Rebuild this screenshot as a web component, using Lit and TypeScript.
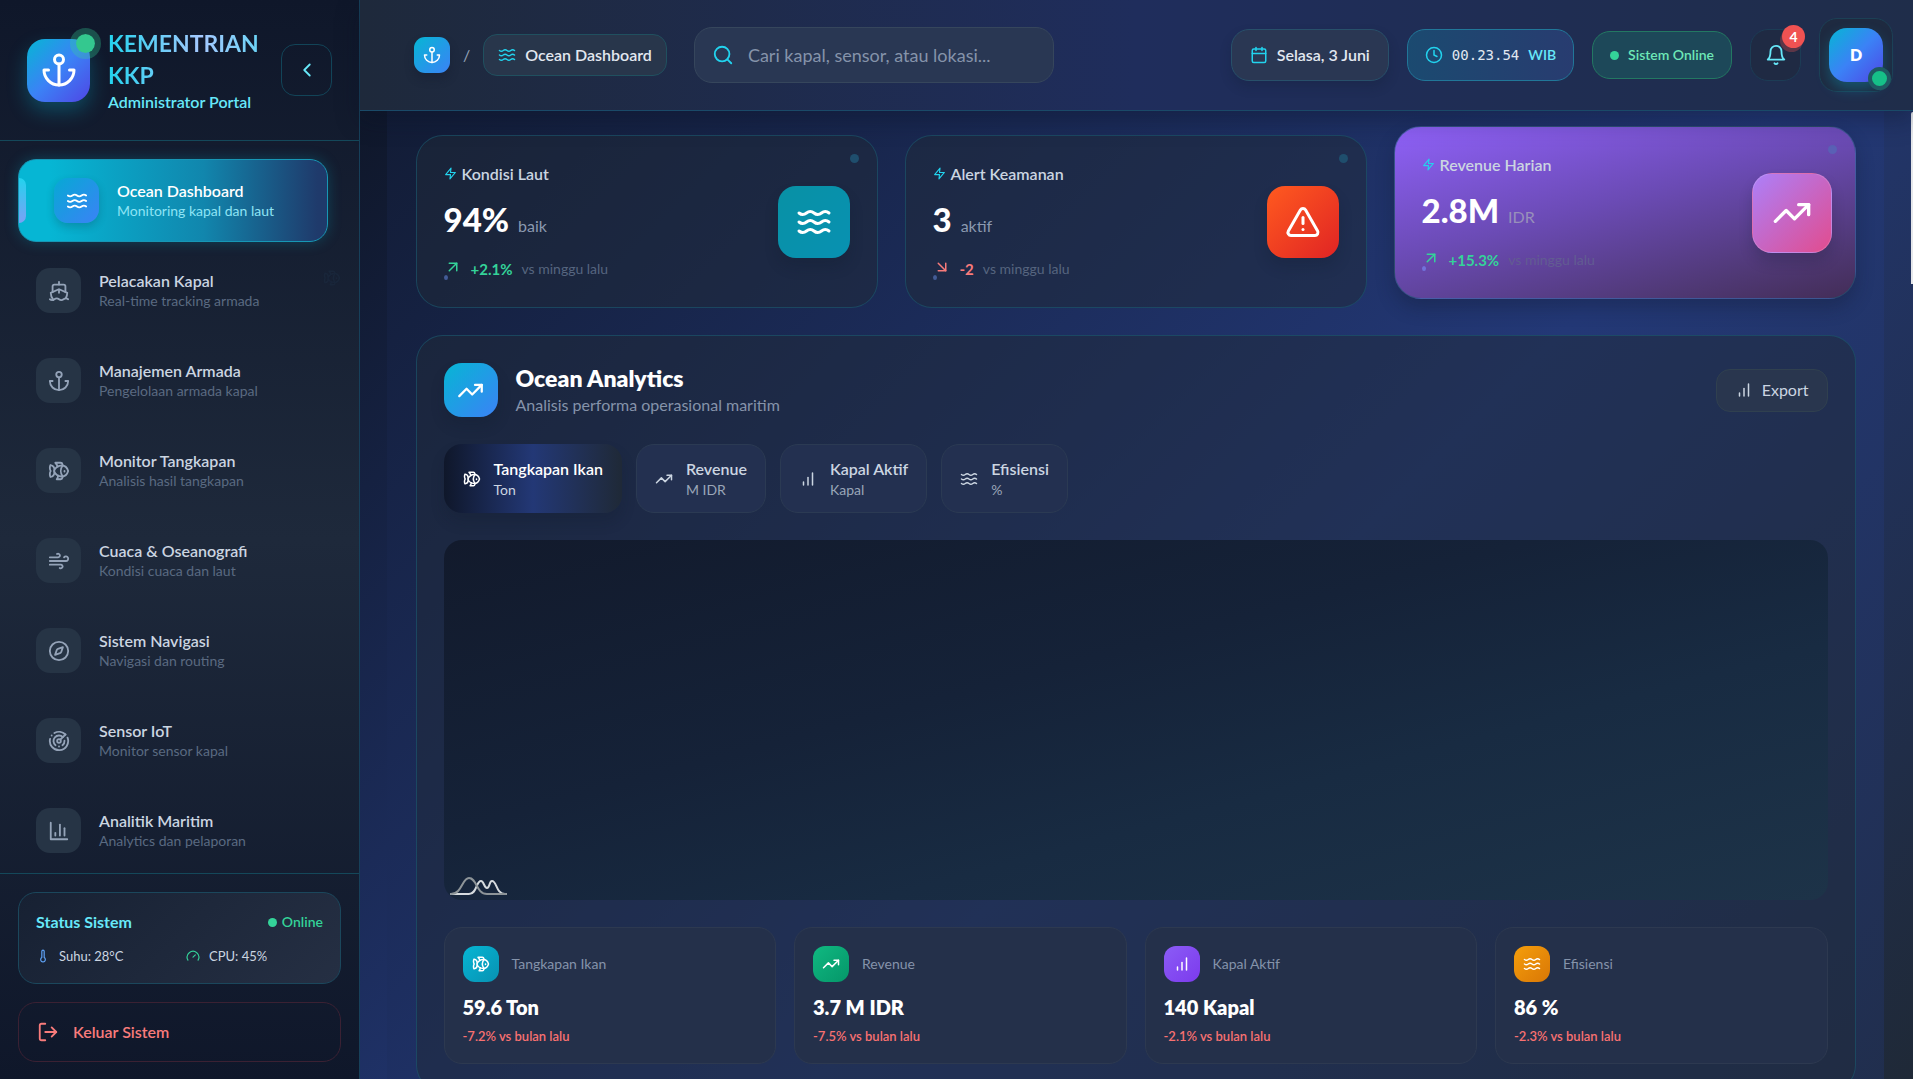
import { LitElement, html, css, svg, nothing } from "lit";
import { customElement, property, state } from "lit/decorators.js";
import { classMap } from "lit/directives/class-map.js";

const ICONS: Record<string, unknown> = {
  anchor: svg`<path d="M12 22V8"/><path d="M5 12H2a10 10 0 0 0 20 0h-3"/><circle cx="12" cy="5" r="3"/>`,
  waves: svg`<path d="M2 6c.6.5 1.2 1 2.5 1C7 7 7 5 9.5 5c2.6 0 2.4 2 5 2 2.5 0 2.5-2 5-2 1.3 0 1.9.5 2.5 1"/><path d="M2 12c.6.5 1.2 1 2.5 1 2.5 0 2.5-2 5-2 2.6 0 2.4 2 5 2 2.5 0 2.5-2 5-2 1.3 0 1.9.5 2.5 1"/><path d="M2 18c.6.5 1.2 1 2.5 1 2.5 0 2.5-2 5-2 2.6 0 2.4 2 5 2 2.5 0 2.5-2 5-2 1.3 0 1.9.5 2.5 1"/>`,
  ship: svg`<path d="M12 10.189V14"/><path d="M12 2v3"/><path d="M19 13V7a2 2 0 0 0-2-2H7a2 2 0 0 0-2 2v6"/><path d="M19.38 20A11.6 11.6 0 0 0 21 14l-8.188-3.639a2 2 0 0 0-1.624 0L3 14a11.6 11.6 0 0 0 2.81 7.76"/><path d="M2 21c.6.5 1.2 1 2.5 1 2.5 0 2.5-2 5-2 1.3 0 1.9.5 2.5 1s1.2 1 2.5 1c2.5 0 2.5-2 5-2 1.3 0 1.9.5 2.5 1"/>`,
  fish: svg`<path d="M6.5 12c.94-3.46 4.94-6 8.5-6 3.56 0 6.06 2.54 7 6-.94 3.47-3.44 6-7 6s-7.56-2.53-8.5-6Z"/><path d="M18 12v.5"/><path d="M16 17.93a9.77 9.77 0 0 1 0-11.86"/><path d="M7 10.67C7 8 5.58 5.97 2.73 5.5c-1 1.5-1 5 .23 6.5-1.24 1.5-1.24 5-.23 6.5C5.58 18.03 7 16 7 13.33"/><path d="M10.46 7.26C10.2 5.88 9.17 4.24 8 3h5.8a2 2 0 0 1 1.98 1.67l.23 1.4"/><path d="m16.01 17.93-.23 1.4A2 2 0 0 1 13.8 21H9.5a5.96 5.96 0 0 0 1.49-3.98"/>`,
  wind: svg`<path d="M12.8 19.6A2 2 0 1 0 14 16H2"/><path d="M17.5 8a2.5 2.5 0 1 1 2 4H2"/><path d="M9.8 4.4A2 2 0 1 1 11 8H2"/>`,
  compass: svg`<path d="m16.24 7.76-1.804 5.411a2 2 0 0 1-1.265 1.265L7.76 16.24l1.804-5.411a2 2 0 0 1 1.265-1.265z"/><circle cx="12" cy="12" r="10"/>`,
  radar: svg`<path d="M19.07 4.93A10 10 0 0 0 6.99 3.34"/><path d="M4 6h.01"/><path d="M2.29 9.62A10 10 0 1 0 21.31 8.35"/><path d="M16.24 7.76A6 6 0 1 0 8.23 16.67"/><path d="M12 18h.01"/><path d="M17.99 11.66A6 6 0 0 1 15.77 16.67"/><circle cx="12" cy="12" r="2"/><path d="m13.41 10.59 5.66-5.66"/>`,
  chart: svg`<path d="M3 3v18h18"/><path d="M18 17V9"/><path d="M13 17V5"/><path d="M8 17v-3"/>`,
  bars: svg`<path d="M12 20V10"/><path d="M18 20V4"/><path d="M6 20v-4"/>`,
  thermometer: svg`<path d="M14 4v10.54a4 4 0 1 1-4 0V4a2 2 0 0 1 4 0Z"/>`,
  gauge: svg`<path d="m12 14 4-4"/><path d="M3.34 19a10 10 0 1 1 17.32 0"/>`,
  logout: svg`<path d="M9 21H5a2 2 0 0 1-2-2V5a2 2 0 0 1 2-2h4"/><path d="m16 17 5-5-5-5"/><path d="M21 12H9"/>`,
  search: svg`<circle cx="11" cy="11" r="8"/><path d="m21 21-4.3-4.3"/>`,
  calendar: svg`<path d="M8 2v4"/><path d="M16 2v4"/><rect width="18" height="18" x="3" y="4" rx="2"/><path d="M3 10h18"/>`,
  clock: svg`<circle cx="12" cy="12" r="10"/><path d="M12 6v6l4 2"/>`,
  bell: svg`<path d="M6 8a6 6 0 0 1 12 0c0 7 3 9 3 9H3s3-2 3-9"/><path d="M10.3 21a1.94 1.94 0 0 0 3.4 0"/>`,
  zap: svg`<path d="M13 2 3 14h9l-1 8 10-12h-9l1-8z"/>`,
  up: svg`<path d="M7 7h10v10"/><path d="M7 17 17 7"/>`,
  down: svg`<path d="m7 7 10 10"/><path d="M17 7v10H7"/>`,
  trend: svg`<path d="m22 7-8.5 8.5-5-5L2 17"/><path d="M16 7h6v6"/>`,
  alert: svg`<path d="m21.73 18-8-14a2 2 0 0 0-3.48 0l-8 14A2 2 0 0 0 4 21h16a2 2 0 0 0 1.73-3"/><path d="M12 9v4"/><path d="M12 17h.01"/>`,
  left: svg`<path d="m15 18-6-6 6-6"/>`,
};

@customElement("line-icon")
class LineIcon extends LitElement {
  @property() name = "";
  @property({ type: Number }) size = 20;
  @property({ type: Number }) weight = 2;

  static styles = css`
    :host { display: inline-flex; flex: none; }
    svg { display: block; fill: none; stroke: currentColor; stroke-linecap: round; stroke-linejoin: round; }
  `;

  render() {
    return html`<svg width=${this.size} height=${this.size} viewBox="0 0 24 24" stroke-width=${this.weight} aria-hidden="true">${ICONS[this.name] ?? nothing}</svg>`;
  }
}

const NAV = [
  { icon: "waves", title: "Ocean Dashboard", sub: "Monitoring kapal dan laut" },
  { icon: "ship", title: "Pelacakan Kapal", sub: "Real-time tracking armada" },
  { icon: "anchor", title: "Manajemen Armada", sub: "Pengelolaan armada kapal" },
  { icon: "fish", title: "Monitor Tangkapan", sub: "Analisis hasil tangkapan" },
  { icon: "wind", title: "Cuaca & Oseanografi", sub: "Kondisi cuaca dan laut" },
  { icon: "compass", title: "Sistem Navigasi", sub: "Navigasi dan routing" },
  { icon: "radar", title: "Sensor IoT", sub: "Monitor sensor kapal" },
  { icon: "chart", title: "Analitik Maritim", sub: "Analytics dan pelaporan" },
];

const STATS = [
  { title: "Kondisi Laut", value: "94%", unit: "baik", delta: "+2.1%", up: true, icon: "waves", tone: "teal" },
  { title: "Alert Keamanan", value: "3", unit: "aktif", delta: "-2", up: false, icon: "alert", tone: "red" },
  { title: "Revenue Harian", value: "2.8M", unit: "IDR", delta: "+15.3%", up: true, icon: "trend", tone: "pink" },
];

const METRICS = [
  { icon: "fish", title: "Tangkapan Ikan", unit: "Ton", value: "59.6 Ton", delta: "-7.2%", tone: "cyan" },
  { icon: "trend", title: "Revenue", unit: "M IDR", value: "3.7 M IDR", delta: "-7.5%", tone: "green" },
  { icon: "bars", title: "Kapal Aktif", unit: "Kapal", value: "140 Kapal", delta: "-2.1%", tone: "violet" },
  { icon: "waves", title: "Efisiensi", unit: "%", value: "86 %", delta: "-2.3%", tone: "amber" },
];

@customElement("app-root")
class AppRoot extends LitElement {
  @state() private page = 0;
  @state() private tab = 0;

  static styles = css`
    :host { display: block; font-family: Lato, "Open Sans", sans-serif; font-size: 16px; line-height: 24px; color: #fff; }
    * { box-sizing: border-box; }
    button, input { font: inherit; color: inherit; margin: 0; }
    button { cursor: pointer; text-align: left; }
    h1, h2, h3, p, ul { margin: 0; padding: 0; font-size: inherit; font-weight: inherit; }
    a { color: inherit; text-decoration: none; }
    .tile { display: flex; align-items: center; justify-content: center; flex: none; color: #fff; }

    .shell { display: flex; height: 100vh; overflow: hidden; background: #0f172a; }

    .sidebar { position: relative; display: flex; flex-direction: column; flex: none; width: 360px; border-right: 1px solid #17405a; background: linear-gradient(180deg, #0f172a 0%, #1e293b 50%, #0f172a 100%); }
    .brand { display: flex; align-items: center; gap: 18px; height: 141px; padding: 0 27px; border-bottom: 1px solid #14485a; }
    .logo { position: relative; width: 63px; height: 63px; border-radius: 18px; background: linear-gradient(135deg, #06b6d4, #3b82f6 50%, #4f46e5); box-shadow: 0 9px 20px rgba(6, 182, 212, .3); }
    .logo-dot { position: absolute; top: -11px; right: -11px; width: 31px; height: 31px; border: 6px solid rgba(52, 211, 153, .3); border-radius: 50%; background: #34c88f; background-clip: padding-box; }
    .brand-text { flex: 1; min-width: 0; }
    .brand-name { font-size: 23px; line-height: 32px; font-weight: 700; color: transparent; background: linear-gradient(90deg, #22d3ee, #a5c8ff 60%, #67d4f5); -webkit-background-clip: text; background-clip: text; }
    .brand-sub { font-size: 16px; line-height: 22px; font-weight: 600; color: #67e8f9; white-space: nowrap; }
    .collapse { display: flex; align-items: center; justify-content: center; width: 51px; height: 52px; padding: 0; border: 1px solid #124458; border-radius: 14px; background: none; color: #67e8f9; }

    .nav { flex: 1; min-height: 0; overflow: hidden; padding: 18px 31px 0 18px; }
    .nav-list { display: flex; flex-direction: column; gap: 7px; list-style: none; }
    .nav-item { position: relative; display: flex; align-items: center; gap: 18px; width: 100%; height: 83px; padding: 0 17px; border: 1px solid transparent; border-radius: 18px; background: none; overflow: hidden; }
    .nav-icon { width: 45px; height: 45px; border-radius: 14px; background: #263445; color: #94a3b8; }
    .nav-title { display: block; font-size: 16px; line-height: 20px; font-weight: 600; color: #cbd5e1; }
    .nav-sub { display: block; font-size: 14px; line-height: 20px; color: #5a6a81; }
    .nav-item.active { padding-left: 35px; border-color: #1797b5; background: linear-gradient(90deg, #06b6d4 10%, #1186ad 60%, #1f3a6b 97%); box-shadow: 0 0 14px rgba(6, 182, 212, .25); }
    .nav-item.active::before { content: ""; position: absolute; left: 0; top: 18px; width: 7px; height: 45px; border-radius: 0 9px 9px 0; background: linear-gradient(180deg, #22d3ee, #7ca0f5); }
    .active .nav-icon { background: linear-gradient(135deg, #06a9d4, #3b82f6); box-shadow: 0 4px 8px rgba(15, 23, 42, .2); color: #fff; }
    .active .nav-title { color: #fff; }
    .active .nav-sub { color: #8ee4f5; }
    .ghost { position: absolute; left: 323px; top: 269px; color: #19263a; }

    .side-foot { display: flex; flex-direction: column; gap: 18px; padding: 18px 18px 17px; border-top: 1px solid #14485a; }
    .status { display: flex; flex-direction: column; gap: 12px; height: 92px; padding: 17px; border: 1px solid #1b475c; border-radius: 18px; background: linear-gradient(135deg, #172133, #252f43); }
    .status-row { display: flex; align-items: center; justify-content: space-between; line-height: 24px; }
    .status-title { font-weight: 700; color: #67e8f9; }
    .online { display: flex; align-items: center; gap: 5px; font-size: 14px; font-weight: 600; color: #34d399; }
    .dot { width: 9px; height: 9px; border-radius: 50%; background: #34d399; }
    .readings { display: grid; grid-template-columns: 1fr 1fr; gap: 13px; font-size: 13px; line-height: 20px; color: #cbd5e1; }
    .reading { display: flex; align-items: center; gap: 9px; }
    .temp { color: #60a5fa; }
    .cpu { color: #34d399; }
    .logout { display: flex; align-items: center; gap: 14px; height: 60px; padding: 0 18px; border: 1px solid #3b2133; border-radius: 18px; background: none; color: #f87b7b; font-weight: 600; }

    .main { position: relative; display: flex; flex-direction: column; flex: 1; min-width: 0; }
    .topbar { position: relative; z-index: 1; display: flex; align-items: center; gap: 27px; height: 111px; flex: none; padding: 0 20px 0 54px; border-bottom: 1px solid #1a4a68; background: linear-gradient(90deg, #1e293b 0%, #1f2d5c 50%, #1f2d4a 100%); box-shadow: 0 9px 22px rgba(10, 18, 36, .35); }
    .crumbs { display: flex; align-items: center; gap: 13px; color: #94a3b8; }
    .home { width: 36px; height: 36px; border-radius: 11px; background: linear-gradient(135deg, #06b6d4, #3b82f6); box-shadow: 0 6px 10px rgba(15, 23, 42, .3); }
    .crumb { display: flex; align-items: center; gap: 9px; height: 42px; padding: 0 14px; border: 1px solid #20505f; border-radius: 14px; background: #28364b; color: #e2e8f0; font-weight: 600; white-space: nowrap; }
    .cyan { color: #22d3ee; }
    .search { display: flex; align-items: center; gap: 14px; flex: 0 1 360px; min-width: 0; height: 56px; padding: 0 17px; border: 1px solid #36465c; border-radius: 18px; background: #293753; }
    .search-input { flex: 1; min-width: 0; padding: 0; border: 0; outline: 0; background: none; font-size: 18px; }
    .search-input::placeholder { color: #8593aa; opacity: 1; }
    .tools { display: flex; align-items: center; gap: 18px; margin-left: auto; }
    .pill { display: flex; align-items: center; justify-content: center; gap: 9px; height: 52px; padding: 0 18px; border: 1px solid #28506a; border-radius: 18px; background: #2a3753; font-weight: 600; color: #e2e8f0; white-space: nowrap; box-shadow: 0 6px 12px rgba(15, 23, 42, .2); }
    .pill.time { padding: 0 17px; border-color: #217799; background: linear-gradient(90deg, #1b4a70, #283c70); box-shadow: none; }
    .mono { font-family: "DejaVu Sans Mono", monospace; font-size: 14px; font-weight: 400; }
    .zone { font-size: 14px; color: #67e8f9; }
    .pill.ok { padding: 0 17px; height: 48px; border-color: #237862; background: #1d4859; font-size: 14px; color: #6ee7b7; box-shadow: none; }
    .bell { position: relative; display: flex; align-items: center; justify-content: center; width: 51px; height: 52px; padding: 0; border: 1px solid #1c3c55; border-radius: 18px; background: #1f2a43; color: #67e8f9; }
    .badge { position: absolute; top: -5px; right: -5px; display: flex; align-items: center; justify-content: center; width: 23px; height: 23px; border-radius: 50%; background: #f05252; box-shadow: -2px 4px 0 rgba(240, 82, 82, .3); color: #fff; font-size: 14px; font-weight: 700; }
    .profile { display: flex; align-items: center; justify-content: center; width: 74px; height: 74px; padding: 0; border: 1px solid #1c4055; border-radius: 18px; background: #1e2a40; }
    .avatar { position: relative; width: 54px; height: 54px; border-radius: 18px; background: linear-gradient(135deg, #06b6d4, #3b82f6 50%, #4f46e5); box-shadow: 0 7px 14px rgba(6, 182, 212, .3); font-size: 16px; font-weight: 800; }
    .presence { position: absolute; right: -8px; bottom: -8px; width: 23px; height: 23px; border: 4px solid #1f5a62; border-radius: 50%; background: #16c088; }

    .content { flex: 1; min-height: 0; padding: 0 29px 0 27px; overflow: hidden; background: linear-gradient(135deg, #0f172a, #233876 50%, #1f2937); }
    .canvas { min-height: 100%; padding-top: 24px; background: linear-gradient(135deg, #0f172a -190px, #233876 987px, #1f2937 2165px); }
    .inner { display: flex; flex-direction: column; gap: 27px; max-width: 1440px; margin: 0 auto; }
    .thumb { position: absolute; right: 0; top: 112px; width: 2px; height: 172px; border-radius: 2px 0 0 0; background: #e5e7eb; }

    .stats { display: grid; grid-template-columns: repeat(3, 1fr); gap: 27px; }
    .stat { position: relative; display: flex; align-items: center; justify-content: space-between; height: 173px; padding: 27px; border: 1px solid rgba(26, 92, 115, .6); border-radius: 27px; background: rgba(31, 41, 55, .5); }
    .stat.raised { transform: translateY(-9px); background: linear-gradient(165deg, #8f61f8, #6b4bb5 45%, #4f3874 82%, #432d57); box-shadow: 0 9px 18px rgba(15, 23, 42, .3); }
    .stat::after { content: ""; position: absolute; top: 18px; right: 18px; width: 9px; height: 9px; border-radius: 50%; background: #1f4e6d; }
    .stat.raised::after { background: #5a60b5; }
    .stat-body { display: flex; flex-direction: column; }
    .stat-title { display: flex; align-items: center; gap: 5px; font-size: 16px; line-height: 22px; font-weight: 600; color: #cbd5e1; }
    .stat-line { display: flex; align-items: baseline; gap: 9px; padding: 14px 0 18px; }
    .stat-value { font-size: 33px; line-height: 40px; font-weight: 900; }
    .stat-unit { font-size: 16px; color: #8b99b0; }
    .stat-trend { position: relative; display: flex; align-items: center; gap: 9px; font-size: 15px; }
    .stat-trend::before { content: ""; position: absolute; left: 0; bottom: 1px; width: 4px; height: 5px; border-radius: 50%; background: #435c96; }
    .raised .stat-trend::before { background: #7272db; }
    .arrow { display: flex; padding-bottom: 3px; }
    .gain { color: #34d399; font-weight: 700; }
    .loss { color: #f87b7b; font-weight: 700; }
    .stat-note { font-size: 14px; color: #56657f; }
    .raised .stat-note { color: #625c92; }
    .raised .stat-unit { color: #9890ba; }
    .stat-tile { width: 72px; height: 72px; border-radius: 18px; box-shadow: 0 9px 14px rgba(15, 23, 42, .2); }
    .raised .stat-tile { width: 80px; height: 80px; margin-right: -4px; border-radius: 20px; border: 1px solid rgba(255, 255, 255, .15); }
    .teal { background: linear-gradient(135deg, #0891a5, #0891b2); }
    .red { background: linear-gradient(135deg, #ff5a1f, #e02424); }
    .pink { background: linear-gradient(135deg, #ac80fa, #e24c8e); }

    .panel { display: flex; flex-direction: column; gap: 27px; padding: 27px; border: 1px solid rgba(26, 92, 115, .6); border-radius: 27px; background: rgba(31, 41, 55, .5); }
    .panel-head { display: flex; align-items: center; gap: 18px; }
    .panel-tile { width: 54px; height: 54px; border-radius: 18px; background: linear-gradient(135deg, #06b6d4, #3b82f6); box-shadow: 0 9px 14px rgba(15, 23, 42, .2); }
    .panel-text { flex: 1; }
    .panel-title { font-size: 23px; line-height: 30px; font-weight: 800; }
    .panel-sub { font-size: 16px; line-height: 24px; color: #8593aa; }
    .export { display: flex; align-items: center; gap: 9px; height: 43px; padding: 0 18px; border: 1px solid #30404f; border-radius: 14px; background: #29364e; color: #cbd5e1; font-size: 16px; }
    .tabs { display: flex; gap: 14px; }
    .tab { display: flex; align-items: center; gap: 13px; height: 69px; padding: 0 18px; border: 1px solid #2b3a53; border-radius: 18px; background: #233050; color: #cbd5e1; }
    .tab-title { display: block; font-size: 16px; line-height: 22px; font-weight: 600; }
    .tab-unit { display: block; font-size: 14px; line-height: 20px; color: #9aa6b8; }
    .tab.active { border-color: transparent; background: linear-gradient(90deg, #0f172a, #233876 50%, #1f2937) border-box; box-shadow: 0 9px 14px rgba(15, 23, 42, .2); color: #fff; }
    .tab.active .tab-unit { color: #cbd5e1; }
    .plot { display: flex; align-items: flex-end; height: 360px; padding: 0 5px 3px; border-radius: 18px; background: linear-gradient(165deg, #121a2c, #152238 40%, #182b42 65%, #1d3348); }
    .plot-mark { display: block; fill: none; stroke-width: 2; stroke-linecap: round; stroke-linejoin: round; }
    .metrics { display: grid; grid-template-columns: repeat(4, 1fr); gap: 18px; }
    .metric { height: 137px; padding: 18px; border: 1px solid #2d3950; border-radius: 18px; background: #24304a; }
    .metric-head { display: flex; align-items: center; gap: 13px; font-size: 14px; color: #8593aa; }
    .metric-tile { width: 36px; height: 36px; border-radius: 12px; }
    .metric-value { margin-top: 11px; font-size: 20px; line-height: 28px; font-weight: 800; }
    .metric-delta { margin-top: 5px; font-size: 13px; line-height: 20px; font-weight: 600; color: #f87171; }
    .metric-tile.cyan { background: linear-gradient(135deg, #06b6d4, #0891b2); color: #fff; }
    .green { background: linear-gradient(135deg, #10b981, #059669); }
    .violet { background: linear-gradient(135deg, #8b5cf6, #7c3aed); }
    .amber { background: linear-gradient(135deg, #f59e0b, #d97706); }
  `;

  private sidebar() {
    return html`
      <aside class="sidebar">
        <div class="brand">
          <div class="tile logo"><line-icon name="anchor" .size=${36}></line-icon><span class="logo-dot"></span></div>
          <div class="brand-text">
            <h1 class="brand-name">KEMENTRIAN KKP</h1>
            <p class="brand-sub">Administrator Portal</p>
          </div>
          <button class="collapse" aria-label="Tutup menu"><line-icon name="left" .size=${22}></line-icon></button>
        </div>
        <nav class="nav">
          <ul class="nav-list">
            ${NAV.map((n, i) => html`<li>
              <button class=${classMap({ "nav-item": true, active: i === this.page })} @click=${() => (this.page = i)}>
                <span class="tile nav-icon"><line-icon name=${n.icon} .size=${22}></line-icon></span>
                <span><span class="nav-title">${n.title}</span><span class="nav-sub">${n.sub}</span></span>
              </button></li>`)}
          </ul>
        </nav>
        <line-icon class="ghost" name="fish" .size=${18}></line-icon>
        <div class="side-foot">
          <section class="status">
            <div class="status-row">
              <h2 class="status-title">Status Sistem</h2>
              <span class="online"><span class="dot"></span>Online</span>
            </div>
            <div class="readings">
              <span class="reading"><line-icon class="temp" name="thermometer" .size=${14}></line-icon>Suhu: 28°C</span>
              <span class="reading"><line-icon class="cpu" name="gauge" .size=${14}></line-icon>CPU: 45%</span>
            </div>
          </section>
          <button class="logout"><line-icon name="logout" .size=${22}></line-icon>Keluar Sistem</button>
        </div>
      </aside>`;
  }

  private topbar() {
    return html`
      <header class="topbar">
        <nav class="crumbs">
          <a class="tile home" href="#" aria-label="Beranda"><line-icon name="anchor" .size=${18}></line-icon></a>
          <span>/</span>
          <a class="crumb" href="#"><line-icon class="cyan" name="waves" .size=${18}></line-icon>Ocean Dashboard</a>
        </nav>
        <label class="search">
          <line-icon class="cyan" name="search" .size=${22}></line-icon>
          <input class="search-input" type="search" aria-label="Cari" placeholder="Cari kapal, sensor, atau lokasi..." />
        </label>
        <div class="tools">
          <span class="pill"><line-icon class="cyan" name="calendar" .size=${18}></line-icon>Selasa, 3 Juni</span>
          <span class="pill time"><line-icon class="cyan" name="clock" .size=${18}></line-icon><span class="mono">00.23.54</span><span class="zone">WIB</span></span>
          <span class="pill ok"><span class="dot"></span>Sistem Online</span>
          <button class="bell" aria-label="Notifikasi"><line-icon name="bell" .size=${22}></line-icon><span class="badge">4</span></button>
          <button class="profile"><span class="tile avatar">D<span class="presence"></span></span></button>
        </div>
      </header>`;
  }

  private stat(s: (typeof STATS)[number]) {
    return html`
      <article class=${classMap({ stat: true, raised: s.tone === "pink" })}>
        <div class="stat-body">
          <h2 class="stat-title"><line-icon class="cyan" name="zap" .size=${13}></line-icon>${s.title}</h2>
          <p class="stat-line"><span class="stat-value">${s.value}</span><span class="stat-unit">${s.unit}</span></p>
          <p class="stat-trend">
            <span class=${classMap({ arrow: true, gain: s.up, loss: !s.up })}><line-icon name=${s.up ? "up" : "down"} .size=${18}></line-icon></span>
            <span class=${s.up ? "gain" : "loss"}>${s.delta}</span>
            <span class="stat-note">vs minggu lalu</span>
          </p>
        </div>
        <div class="tile stat-tile ${s.tone}"><line-icon name=${s.icon} .size=${s.tone === "pink" ? 40 : 36}></line-icon></div>
      </article>`;
  }

  private panel() {
    return html`
      <section class="panel">
        <div class="panel-head">
          <div class="tile panel-tile"><line-icon name="trend" .size=${27}></line-icon></div>
          <div class="panel-text">
            <h2 class="panel-title">Ocean Analytics</h2>
            <p class="panel-sub">Analisis performa operasional maritim</p>
          </div>
          <button class="export"><line-icon name="bars" .size=${18}></line-icon>Export</button>
        </div>
        <div class="tabs">
          ${METRICS.map((m, i) => html`
            <button class=${classMap({ tab: true, active: i === this.tab })} @click=${() => (this.tab = i)}>
              <line-icon name=${m.icon} .size=${18}></line-icon>
              <span><span class="tab-title">${m.title}</span><span class="tab-unit">${m.unit}</span></span>
            </button>`)}
        </div>
        <div class="plot">
          <svg class="plot-mark" width="60" height="20" viewBox="0 0 60 20" aria-hidden="true">
            <path stroke="#d5dade" d="M2 17H20C28 17 27 4 32 4C35 4 35 11 38 11C41 11 40 4 43 4C48 4 47 17 56 17H57"/>
            <path stroke="#8d9498" d="M2 17C13 17 13 1 20 1C28 1 27 17 38 17H57"/>
          </svg>
        </div>
        <div class="metrics">
          ${METRICS.map((m) => html`
            <article class="metric">
              <div class="metric-head"><span class="tile metric-tile ${m.tone}"><line-icon name=${m.icon} .size=${18}></line-icon></span>${m.title}</div>
              <p class="metric-value">${m.value}</p>
              <p class="metric-delta">${m.delta} vs bulan lalu</p>
            </article>`)}
        </div>
      </section>`;
  }

  render() {
    return html`
      <div class="shell">
        ${this.sidebar()}
        <main class="main">
          ${this.topbar()}
          <div class="content">
            <div class="canvas">
              <div class="inner">
                <div class="stats">${STATS.map((s) => this.stat(s))}</div>
                ${this.panel()}
              </div>
            </div>
          </div>
          <span class="thumb"></span>
        </main>
      </div>`;
  }
}
